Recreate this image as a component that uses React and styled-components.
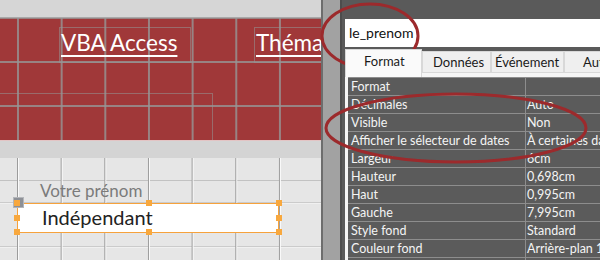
import React from "react";
import styled, { createGlobalStyle } from "styled-components";

const Global = createGlobalStyle`
  html, body { margin: 0; padding: 0; background: #5a5a5a; }
  body { font-family: Lato, "Open Sans", sans-serif; }
`;

const Page = styled.div`
  position: relative;
  display: flex;
  width: 600px;
  height: 260px;
  overflow: hidden;
`;

const Designer = styled.div`
  width: 321px;
  flex: none;
  display: flex;
  flex-direction: column;
  background: #e6e6e6;
  overflow: hidden;
`;

const Ruler = styled.div`
  height: 17px;
  background: #d6d6d6;
  border-bottom: 1px solid #a9a9a9;
  flex: none;
`;

const Section = styled.div`
  position: relative;
  height: ${(p) => p.$h}px;
  background-color: ${(p) => p.$bg};
  background-image: ${(p) => p.$lines};
  flex: none;
  overflow: hidden;
`;

const SectionBar = styled.div`
  height: 17px;
  background: #d4d4d4;
  border-top: 1px solid #e3c4c4;
  flex: none;
`;

const Label = styled.div`
  position: absolute;
  left: ${(p) => p.$x}px;
  top: ${(p) => p.$y}px;
  width: ${(p) => p.$w}px;
  height: ${(p) => p.$h}px;
  border: 1px solid rgba(150, 150, 150, 0.55);
  box-sizing: border-box;
  color: #fff;
  font-size: 22.5px;
  line-height: 30px;
  white-space: nowrap;
  padding-left: 1px;
  span { text-decoration: underline; text-underline-offset: 4px; text-decoration-thickness: 1.5px; }
`;

const Frame = styled.div`
  position: absolute;
  left: -2px;
  top: 75px;
  width: 213px;
  height: 60px;
  border: 1px solid rgba(150, 150, 150, 0.55);
`;

const FieldLabel = styled.div`
  position: absolute;
  left: 40px;
  top: 22px;
  font-size: 17px;
  color: #7b7b7b;
  white-space: nowrap;
`;

const TextBox = styled.div`
  position: absolute;
  left: 17px;
  top: 45px;
  width: 262px;
  height: 30px;
  box-sizing: border-box;
  background: #fff;
  border: 1.5px solid #f6a23c;
  font-size: 20px;
  line-height: 27px;
  color: #222;
  padding-left: 24px;
`;

const Handle = styled.span`
  position: absolute;
  width: 6px;
  height: 6px;
  background: #f8a83e;
  left: ${(p) => p.$x}px;
  top: ${(p) => p.$y}px;
`;

const MoveHandle = styled.span`
  position: absolute;
  left: -5px;
  top: -7px;
  width: 9px;
  height: 9px;
  background: #8d9096;
  border: 1px solid #b4b6ba;
`;

const Splitter = styled.div`
  width: 17px;
  flex: none;
  background: #a2a2a2;
  border-left: 2px solid #6d6d6d;
  border-right: 2px solid #4d4d4d;
`;

const Sheet = styled.div`
  flex: 1;
  background: #5a5a5a;
  display: flex;
  flex-direction: column;
  padding: 19px 0 0 3px;
  min-width: 0;
`;

const NameBox = styled.div`
  height: 28px;
  background: #fff;
  font-size: 14px;
  line-height: 28px;
  padding-left: 4px;
  color: #111;
  flex: none;
`;

const Tabs = styled.div`
  display: flex;
  align-items: flex-end;
  height: 26px;
  flex: none;
`;

const Tab = styled.div`
  width: ${(p) => p.$w}px;
  flex: none;
  box-sizing: border-box;
  height: ${(p) => (p.$active ? 28 : 22)}px;
  margin-bottom: ${(p) => (p.$active ? -4 : 0)}px;
  background: ${(p) => (p.$active ? "#fafafa" : "#efefef")};
  border: 1px solid #d8d8d8;
  border-bottom: ${(p) => (p.$active ? "none" : "1px solid #d8d8d8")};
  font-size: 13px;
  color: #1a1a1a;
  padding-left: ${(p) => p.$pad}px;
  line-height: ${(p) => (p.$active ? 22 : 21)}px;
  white-space: nowrap;
  overflow: hidden;
  position: relative;
  z-index: ${(p) => (p.$active ? 1 : 0)};
`;

const TabPage = styled.div`
  flex: 1;
  background: #f5f5f5;
  padding: 4px 0 0 3px;
`;

const Props = styled.div`
  display: grid;
  grid-template-columns: 177px 1fr;
  grid-auto-rows: 17px;
  gap: 1px;
  background: #8d8d8d;
  border-top: 1px solid #8d8d8d;
`;

const Cell = styled.div`
  background: #5b5b5b;
  color: #f4f4f4;
  font-size: 12.5px;
  line-height: 18px;
  padding-left: ${(p) => (p.$value ? 1 : 3)}px;
  white-space: nowrap;
  overflow: hidden;
`;

const Overlay = styled.svg`
  position: absolute;
  left: 0;
  top: 0;
  pointer-events: none;
`;

const redLines = [
  "linear-gradient(to right, rgba(150,150,150,0.8) 2px, transparent 2px)",
  "linear-gradient(to bottom, rgba(150,150,150,0.8) 2px, transparent 2px)",
].join(",");

const greyLines = [
  "linear-gradient(to right, #9c9c9c 1px, #fafafa 1px, #fafafa 2px, transparent 2px)",
  "linear-gradient(to bottom, transparent 22px, #c2c2c2 22px, #c2c2c2 23px, transparent 23px, transparent 44px, #9c9c9c 44px, #fafafa 45px, transparent 46px, transparent 88px, #9c9c9c 88px, #fafafa 89px, transparent 90px)",
].join(",");

const props = [
  ["Format", ""],
  ["Décimales", "Auto"],
  ["Visible", "Non"],
  ["Afficher le sélecteur de dates", "À certaines dates"],
  ["Largeur", "6cm"],
  ["Hauteur", "0,698cm"],
  ["Haut", "0,995cm"],
  ["Gauche", "7,995cm"],
  ["Style fond", "Standard"],
  ["Couleur fond", "Arrière-plan 1"],
  ["Type bordure", "Continu"],
];

const handles = [
  [-4, -4], [128, -4], [258, -4],
  [-4, 11], [258, 11],
  [-4, 25], [128, 25], [258, 25],
];

export default function App() {
  return (
    <>
      <Global />
      <Page>
        <Designer>
          <Ruler />
          <Section
            $h={122}
            $bg="#a03839"
            $lines={redLines}
            style={{ backgroundSize: "43.67px 100%, 100% 44px", backgroundPosition: "17px 0, 0 43px" }}
          >
            <Label $x={59} $y={9} $w={132} $h={36}>
              <span>VBA Access</span>
            </Label>
            <Label $x={254} $y={9} $w={120} $h={36}>
              <span>Thématiques</span>
            </Label>
            <Frame />
          </Section>
          <SectionBar />
          <Section
            $h={102}
            $bg="#e6e6e6"
            $lines={greyLines}
            style={{ backgroundSize: "43.67px 100%, 100% 100%", backgroundPosition: "17px 0, 0 0" }}
          >
            <FieldLabel>Votre prénom</FieldLabel>
            <TextBox>
              Indépendant
              <MoveHandle />
              {handles.map(([x, y], i) => (
                <Handle key={i} $x={x} $y={y} />
              ))}
            </TextBox>
          </Section>
        </Designer>
        <Splitter />
        <Sheet>
          <NameBox>le_prenom</NameBox>
          <Tabs>
            <Tab $w={77} $pad={18} $active>Format</Tab>
            <Tab $w={69} $pad={10}>Données</Tab>
            <Tab $w={73} $pad={3}>Événement</Tab>
            <Tab $w={60} $pad={18}>Autres</Tab>
          </Tabs>
          <TabPage>
            <Props>
              {props.map(([k, v]) => (
                <React.Fragment key={k}>
                  <Cell>{k}</Cell>
                  <Cell $value>{v}</Cell>
                </React.Fragment>
              ))}
            </Props>
          </TabPage>
        </Sheet>
        <Overlay width="600" height="260" viewBox="0 0 600 260">
          <ellipse cx="370" cy="36" rx="48" ry="32" fill="none" stroke="#9c2a2c" strokeWidth="3" />
          <ellipse cx="456" cy="128" rx="130" ry="34" fill="none" stroke="#9c2a2c" strokeWidth="3" />
        </Overlay>
      </Page>
    </>
  );
}
